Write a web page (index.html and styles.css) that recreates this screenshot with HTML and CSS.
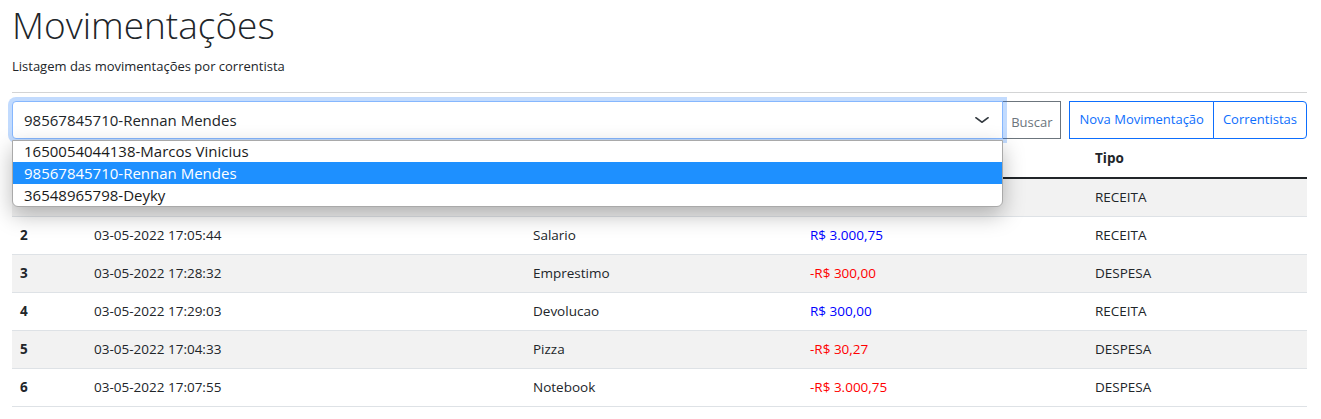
FILE: index.html
```html
<!DOCTYPE html>
<html lang="pt-BR">
<head>
<meta charset="utf-8">
<title>Movimentações</title>
<link rel="stylesheet" href="styles.css">
</head>
<body>
<div class="page">
  <h1 class="title">Movimentações</h1>
  <p class="subtitle">Listagem das movimentações por correntista</p>
  <hr class="divider">
  <div class="toolbar">
    <div class="input-group">
      <div class="select-wrap">
        <div class="select">
          <span>98567845710-Rennan Mendes</span>
          <svg class="chevron" width="16" height="12" viewBox="0 0 16 16" preserveAspectRatio="none"><path d="m2 5 6 6 6-6" fill="none" stroke="#343a40" stroke-width="2" stroke-linecap="round" stroke-linejoin="round"/></svg>
        </div>
        <ul class="options">
          <li class="option">1650054044138-Marcos Vinicius</li>
          <li class="option selected">98567845710-Rennan Mendes</li>
          <li class="option">36548965798-Deyky</li>
        </ul>
      </div>
      <button class="btn btn-secondary-outline">Buscar</button>
    </div>
    <div class="btn-group">
      <button class="btn btn-primary-outline">Nova Movimentação</button>
      <button class="btn btn-primary-outline">Correntistas</button>
    </div>
  </div>
  <table class="table">
    <colgroup>
      <col class="c-id"><col class="c-data"><col class="c-desc"><col class="c-valor"><col class="c-tipo">
    </colgroup>
    <thead>
      <tr><th>#</th><th>Data</th><th>Descrição</th><th>Valor</th><th>Tipo</th></tr>
    </thead>
    <tbody>
      <tr><th>1</th><td>03-05-2022 17:04:10</td><td>Deposito</td><td class="pos">R$ 1.000,00</td><td>RECEITA</td></tr>
      <tr><th>2</th><td>03-05-2022 17:05:44</td><td>Salario</td><td class="pos">R$ 3.000,75</td><td>RECEITA</td></tr>
      <tr><th>3</th><td>03-05-2022 17:28:32</td><td>Emprestimo</td><td class="neg">-R$ 300,00</td><td>DESPESA</td></tr>
      <tr><th>4</th><td>03-05-2022 17:29:03</td><td>Devolucao</td><td class="pos">R$ 300,00</td><td>RECEITA</td></tr>
      <tr><th>5</th><td>03-05-2022 17:04:33</td><td>Pizza</td><td class="neg">-R$ 30,27</td><td>DESPESA</td></tr>
      <tr><th>6</th><td>03-05-2022 17:07:55</td><td>Notebook</td><td class="neg">-R$ 3.000,75</td><td>DESPESA</td></tr>
    </tbody>
  </table>
</div>
</body>
</html>
```
FILE: styles.css
```css
* { box-sizing: border-box; }
body {
  margin: 0;
  font-family: "Open Sans", "Noto Sans", sans-serif;
  color: #212529;
  background: #fff;
  font-size: 14px;
}
.page { padding: 0 14px 0 12px; }
.title {
  margin: 0 0 8px;
  font-size: 37px;
  font-weight: 300;
  line-height: 50px;
  height: 48px;
}
.subtitle {
  margin: 0 0 15px;
  font-size: 13px;
  line-height: 21px;
}
.divider {
  margin: 0 0 8px;
  border: 0;
  border-top: 1px solid #d3d4d5;
}
.toolbar { display: flex; height: 38px; }
.input-group { display: flex; flex: 1; }
.select-wrap { position: relative; flex: 1; }
.select {
  height: 38px;
  border: 1px solid #86b7fe;
  border-radius: 4px 0 0 4px;
  box-shadow: 0 0 0 4px rgba(13,110,253,.25);
  display: flex;
  align-items: center;
  justify-content: space-between;
  padding: 0 12px 0 11px;
  font-size: 15px;
  position: relative;
  z-index: 2;
  background: #fff;
}
.chevron { display: block; }
.options {
  position: absolute;
  left: 0; right: 0;
  top: 39px;
  margin: 0; padding: 0;
  list-style: none;
  background: #fff;
  border: 1px solid #a9a9a9;
  border-radius: 0 0 6px 6px;
  box-shadow: 0 8px 22px rgba(0,0,0,.28);
  z-index: 5;
}
.option {
  height: 22px;
  line-height: 22px;
  padding: 0 11px;
  font-size: 15px;
  color: #1a1a1a;
}
.option:first-child { height: 21px; line-height: 21px; }
.option.selected { background: #1e90ff; color: #fff; }
.btn {
  font-family: inherit;
  font-size: 13px;
  height: 38px;
  padding: 0 8px;
  background: #fff;
  cursor: pointer;
}
.btn-secondary-outline {
  border: 1px solid #6c757d;
  color: #6c757d;
  margin-left: -1px;
  border-radius: 0;
  padding-top: 4px;
}
.btn-group { display: flex; margin-left: 8px; }
.btn-primary-outline {
  border: 1px solid #0d6efd;
  color: #0d6efd;
  border-radius: 0;
  padding: 0 9px 2px;
}
.btn-primary-outline + .btn-primary-outline {
  margin-left: -1px;
  border-radius: 0 4px 4px 0;
}
.table {
  width: 100%;
  border-collapse: collapse;
  margin-top: 1px;
}
.c-id { width: 74px; }
.c-data { width: 439px; }
.c-desc { width: 277px; }
.c-valor { width: 285px; }
.c-tipo { width: 220px; }
.table th, .table td {
  text-align: left;
  padding: 8px;
  line-height: 21px;
  font-size: 13.5px;
  border-bottom: 1px solid #dee2e6;
}
.table thead th { border-bottom: 2px solid #212529; font-weight: 700; }
.table tbody th { font-weight: 700; }
.table tbody tr:nth-child(odd) { background: #f2f2f2; }
.table td.neg { color: #ff0000; }
.table td.pos { color: #0000ff; }
```
